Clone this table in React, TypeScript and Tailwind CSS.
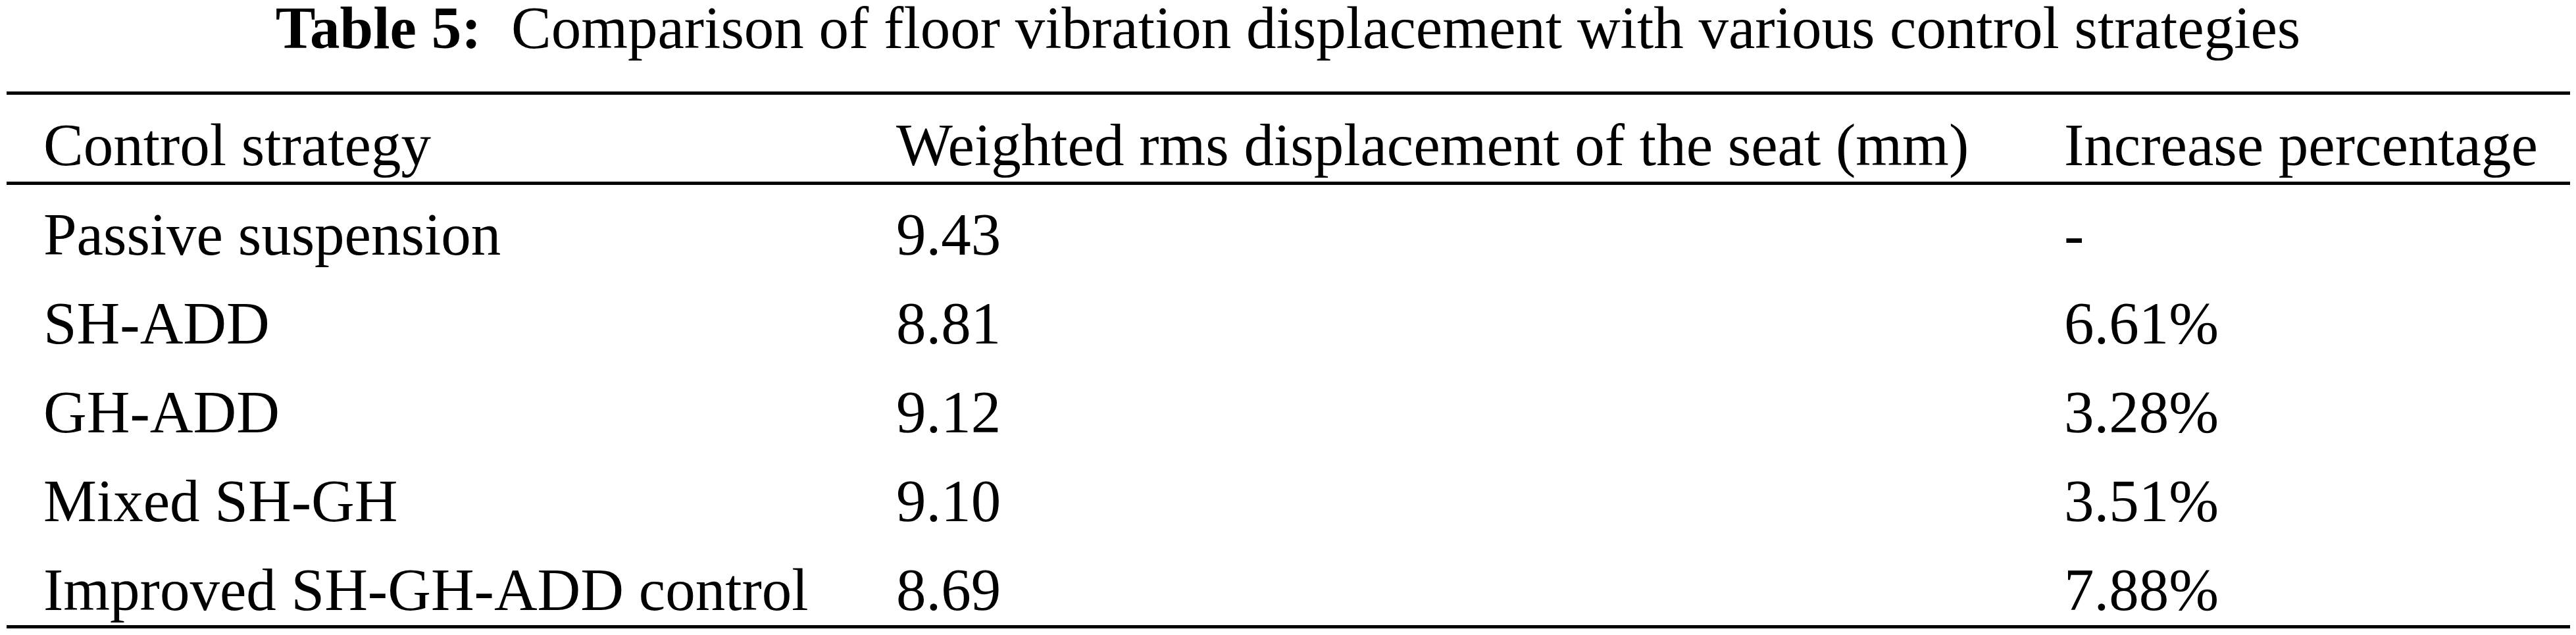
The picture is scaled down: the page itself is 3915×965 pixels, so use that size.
import React from 'react';

interface StrategyRow {
  name: string;
  displacement: string;
  increase: string;
}

const rows: StrategyRow[] = [
  { name: 'Passive suspension', displacement: '9.43', increase: '-' },
  { name: 'SH-ADD', displacement: '8.81', increase: '6.61%' },
  { name: 'GH-ADD', displacement: '9.12', increase: '3.28%' },
  { name: 'Mixed SH-GH', displacement: '9.10', increase: '3.51%' },
  { name: 'Improved SH-GH-ADD control', displacement: '8.69', increase: '7.88%' },
];

const App: React.FC = () => {
  return (
    <div className="w-[3915px] h-[965px] bg-white text-black font-['Liberation_Serif',serif] text-[91px]">
      {/* Caption */}
      <div className="text-center leading-[86px] whitespace-pre">
        <span className="font-bold">Table 5:</span>
        {'  '}Comparison of floor vibration displacement with various control strategies
      </div>

      {/* Table */}
      <div className="ml-[10px] w-[3896px] mt-[53px] border-t-[5px] border-b-[5px] border-black leading-[100px]">
        <div className="grid grid-cols-[1352px_1775px_1fr] pt-[27px] pb-[5px] border-b-[5px] border-black">
          <div className="pl-[56px]">Control strategy</div>
          <div>Weighted rms displacement of the seat (mm)</div>
          <div>Increase percentage</div>
        </div>
        {rows.map((row, i) => (
          <div
            key={row.name}
            className={
              i === rows.length - 1
                ? 'grid grid-cols-[1352px_1775px_1fr] pt-[26px] pb-[3px]'
                : 'grid grid-cols-[1352px_1775px_1fr] pt-[26px] pb-[9px]'
            }
          >
            <div className="pl-[56px]">{row.name}</div>
            <div>{row.displacement}</div>
            <div>{row.increase}</div>
          </div>
        ))}
      </div>
    </div>
  );
};

export default App;
